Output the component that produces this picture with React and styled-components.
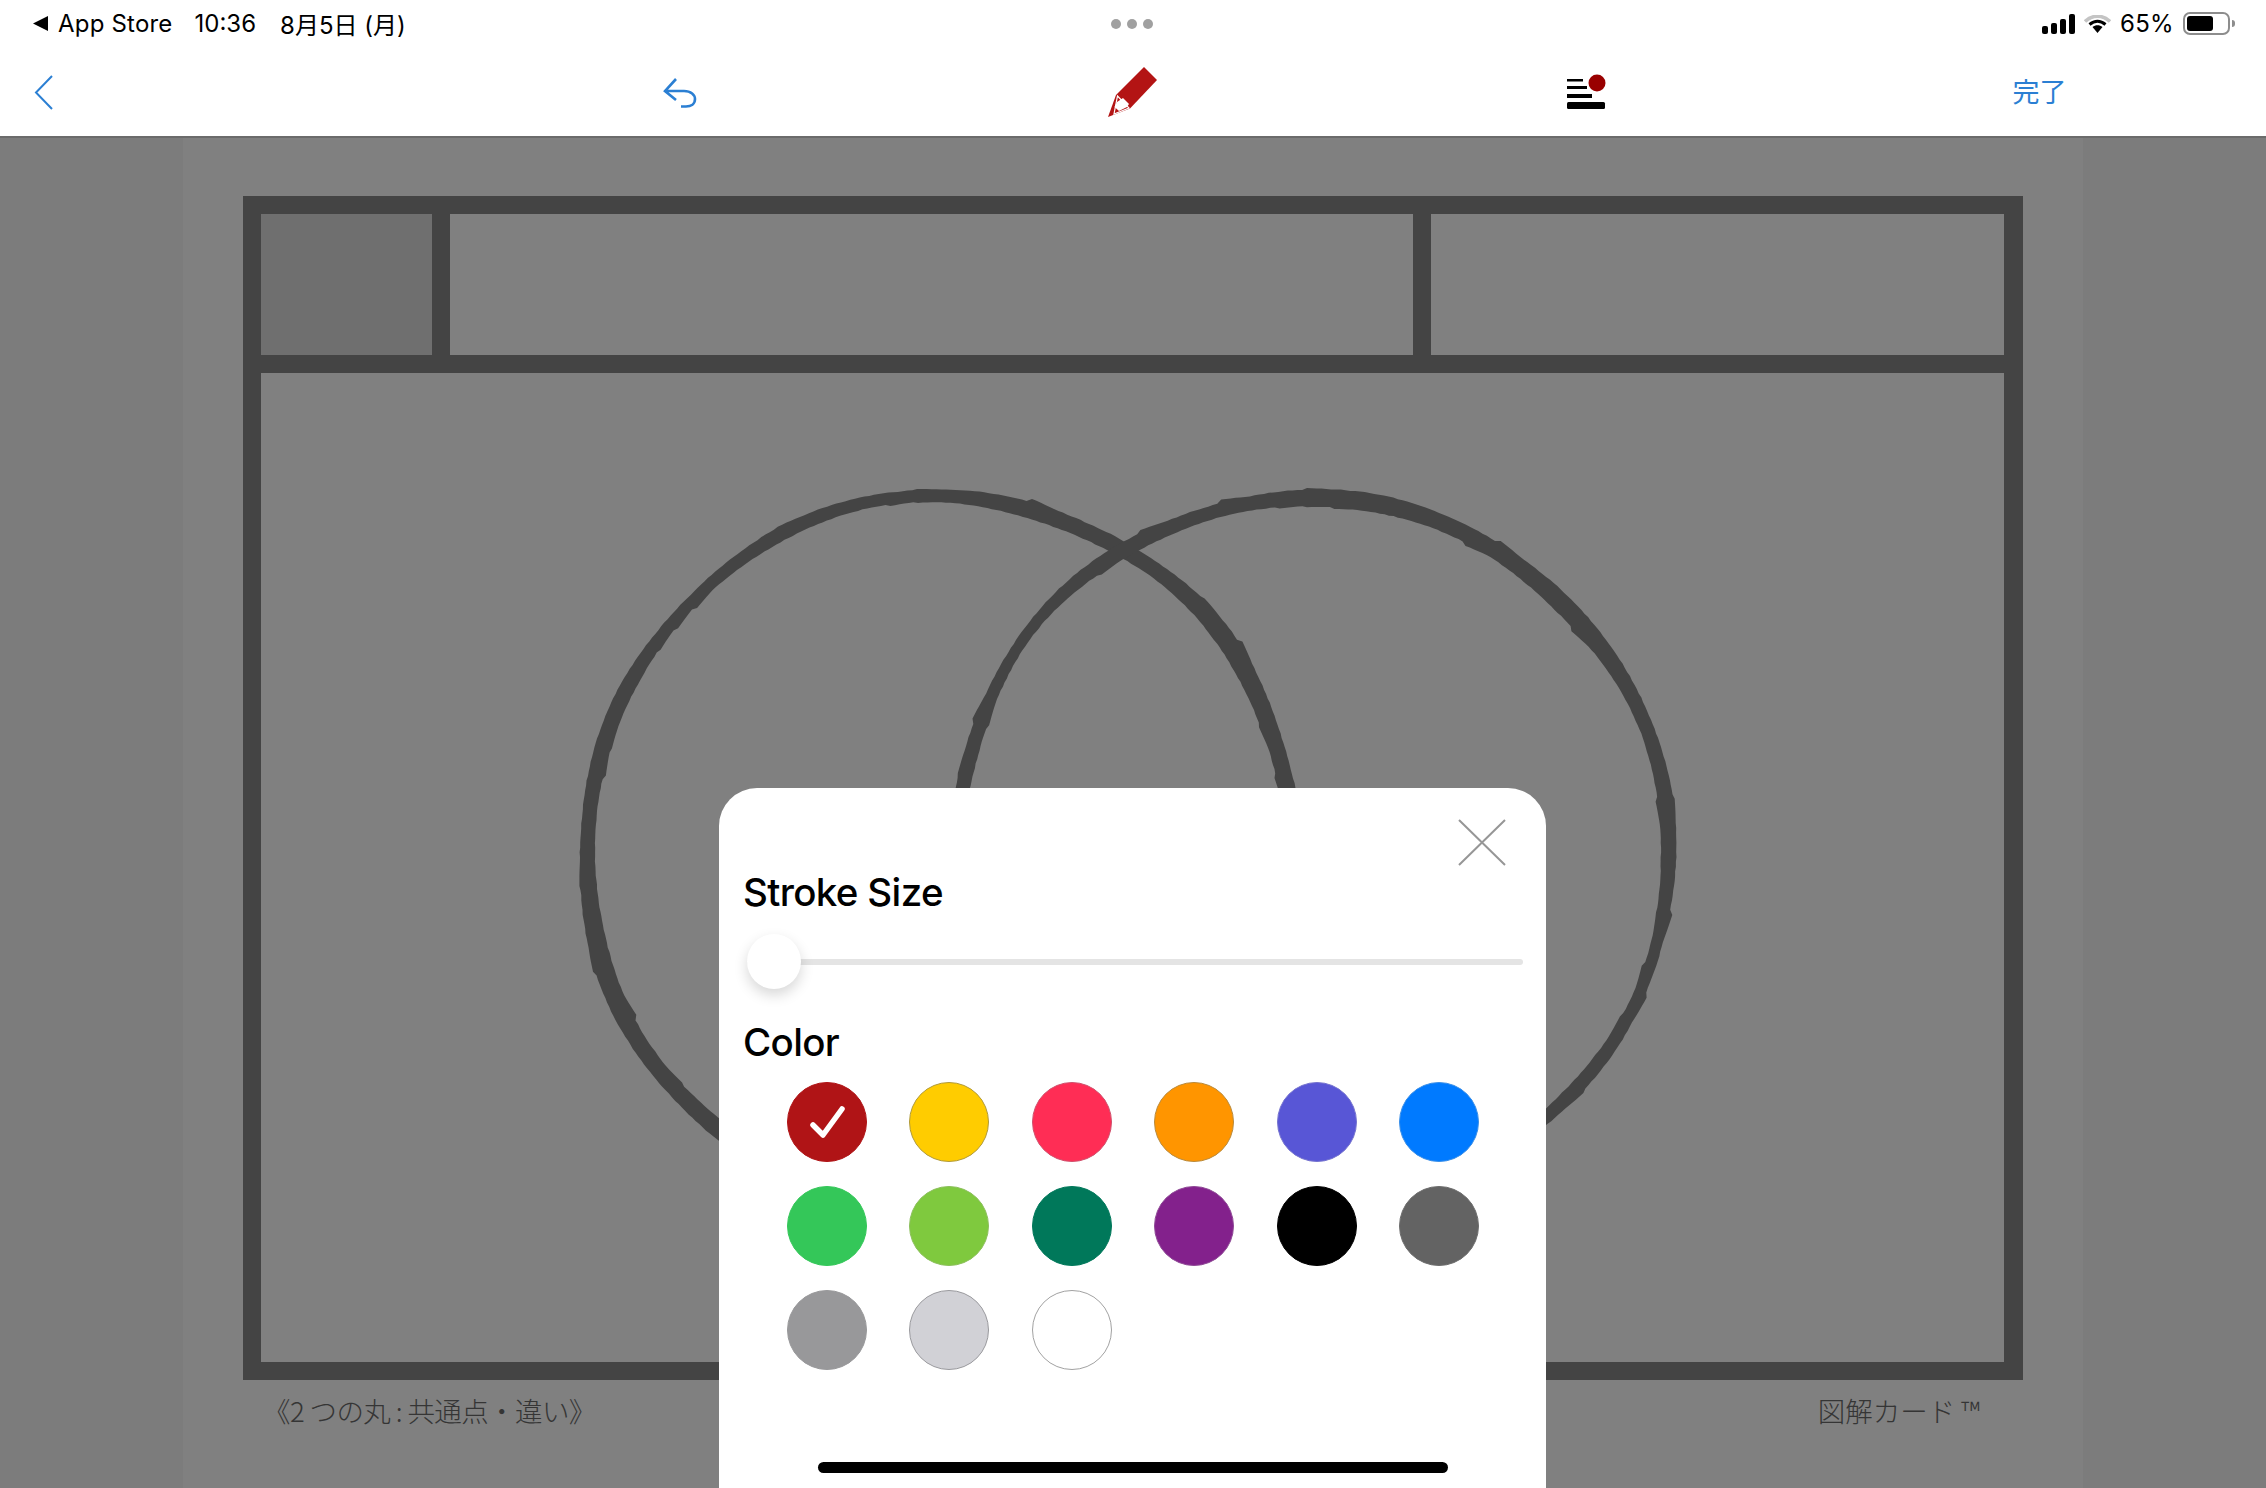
import React from "react";
import styled, { createGlobalStyle } from "styled-components";

const GlobalStyle = createGlobalStyle`
  html, body {
    margin: 0;
    padding: 0;
    background: #7c7c7c;
    font-family: Inter, "Noto Sans CJK JP", sans-serif;
  }
`;

const BLUE = "#2b7fd3";

const SWATCHES = [
  { color: "#b01416", edge: "#b01416", selected: true },
  { color: "#ffcc00", edge: "#b09a3a" },
  { color: "#ff2d55", edge: "#d0506c" },
  { color: "#ff9500", edge: "#b98a3c" },
  { color: "#5856d6", edge: "#7674cf" },
  { color: "#007aff", edge: "#3a8fe8" },
  { color: "#34c759", edge: "#34c759" },
  { color: "#7fc93e", edge: "#8cbf5c" },
  { color: "#00785a", edge: "#00785a" },
  { color: "#83218c", edge: "#8f4a96" },
  { color: "#000000", edge: "#000000" },
  { color: "#636363", edge: "#6d6d6d" },
  { color: "#98989a", edge: "#98989a" },
  { color: "#d1d1d6", edge: "#9a9a9e" },
  { color: "#ffffff", edge: "#a2a2a2" },
];

const angleDiff = (a, b) => {
  const d = Math.abs(a - b) % 360;
  return d > 180 ? 360 - d : d;
};

// hand drawn ring: radius and thickness wobble with the angle, plus burrs along the edges.
// dents pull the line inwards around an angle, the circles in the card aren't quite round
const ringPath = (cx, cy, r, seed, dents) => {
  const rand = (n) => {
    const v = Math.sin(n * 127.1 + seed * 311.7) * 43758.5453;
    return v - Math.floor(v);
  };
  const count = 480;
  const burr = (i, offset) => {
    const slot = Math.floor(i / 6);
    if (rand(slot + offset) < 0.76) return rand(i + offset + 2000) * 0.6;
    return (1 - (i % 6) / 6) * (1 + rand(slot + offset + 500) * 2.6);
  };
  const outer = [];
  const inner = [];
  for (let i = 0; i < count; i++) {
    const deg = (i / count) * 360;
    const a = (deg * Math.PI) / 180;
    const dent = dents.reduce(
      (sum, d) => sum + d.amp * Math.exp(-Math.pow(angleDiff(deg, d.at) / d.width, 2)),
      0
    );
    const wobble = Math.sin(a * 3 + seed) * 1.6 + Math.sin(a * 7 + seed * 2) * 1 - dent;
    const width = 14.5 + Math.sin(a * 2 + seed + 1.6) * 2.6 + Math.sin(a * 9 + seed) * 1.5;
    const ro = r + wobble + width / 2 + burr(i, 0);
    const ri = r + wobble - width / 2 - burr(i, 3000);
    outer.push(`${(cx + Math.cos(a) * ro).toFixed(1)} ${(cy + Math.sin(a) * ro).toFixed(1)}`);
    inner.push(`${(cx + Math.cos(a) * ri).toFixed(1)} ${(cy + Math.sin(a) * ri).toFixed(1)}`);
  }
  return `M${outer.join("L")}Z M${inner.reverse().join("L")}Z`;
};

const LEFT_RING = ringPath(685, 484, 361, 1, [
  { at: 349, amp: 14, width: 24 },
  { at: 298, amp: 6, width: 18 },
  { at: 130, amp: 7, width: 26 },
]);
const RIGHT_RING = ringPath(1046, 484, 361, 2, [
  { at: 191, amp: 10, width: 24 },
  { at: 242, amp: 6, width: 18 },
  { at: 50, amp: 6, width: 26 },
]);

const Page = styled.div`
  width: 2266px;
  height: 1488px;
  position: relative;
  overflow: hidden;
  display: flex;
  flex-direction: column;
  background: #7c7c7c;
`;

const TopBar = styled.header`
  background: #fff;
  border-bottom: 2px solid #6b6b6b;
  flex: none;
`;

const StatusBar = styled.div`
  height: 48px;
  box-sizing: border-box;
  padding: 0 36px 1px 33px;
  display: grid;
  grid-template-columns: 1fr auto 1fr;
  align-items: center;
  font-size: 24px;
  color: #000;
`;

const StatusLeft = styled.div`
  display: flex;
  align-items: center;
  white-space: nowrap;
`;

const BackTriangle = styled.svg`
  width: 15px;
  height: 15px;
  margin-right: 10px;
`;

const StatusText = styled.span`
  margin-right: ${(p) => p.$gap || 0}px;
  letter-spacing: ${(p) => p.$track || 0}px;
`;

const Dots = styled.div`
  display: flex;
  gap: 6px;
`;

const Dot = styled.span`
  width: 10px;
  height: 10px;
  border-radius: 50%;
  background: #a0a0a0;
`;

const StatusRight = styled.div`
  display: flex;
  align-items: center;
  justify-content: flex-end;
`;

const Signal = styled.div`
  display: flex;
  align-items: flex-end;
  gap: 3px;
  height: 20px;
  margin-right: 9px;
`;

const SignalBar = styled.span`
  width: 6px;
  height: ${(p) => p.$h}px;
  border-radius: 2px;
  background: #000;
`;

const Percent = styled.span`
  font-size: 24px;
  margin: 0 9px 0 9px;
  letter-spacing: 0.3px;
`;

const Battery = styled.div`
  width: 47px;
  height: 23px;
  box-sizing: border-box;
  border: 2px solid #8d8d8d;
  border-radius: 7px;
  padding: 2px;
  position: relative;

  &::after {
    content: "";
    position: absolute;
    right: -7px;
    top: 6px;
    width: 3px;
    height: 7px;
    border-radius: 0 3px 3px 0;
    background: #8d8d8d;
  }
`;

const BatteryFill = styled.div`
  width: 26px;
  height: 100%;
  background: #000;
  border-radius: 3px;
`;

const ToolBar = styled.nav`
  height: 88px;
  display: grid;
  grid-template-columns: repeat(5, 1fr);
  align-items: center;
  justify-items: center;
`;

const BackButton = styled.svg`
  justify-self: start;
  margin-left: 34px;
  width: 19px;
  height: 35px;
`;

const LayersIcon = styled.svg`
  margin: 0 0 2px 2px;
`;

const DoneLabel = styled.span`
  font-size: 27px;
  line-height: 30px;
  margin-bottom: 3px;
  color: ${BLUE};
  font-family: "Noto Sans CJK JP", sans-serif;
  font-weight: 400;
`;

const Stage = styled.main`
  flex: 1;
  width: 1900px;
  margin: 0 auto;
  box-sizing: border-box;
  padding: 58px 60px 0 60px;
  background: #808080;
`;

const Frame = styled.div`
  display: grid;
  grid-template-columns: 171px 963px 573px;
  grid-template-rows: 141px 989px;
  gap: 18px;
  padding: 18px;
  background: #444444;
`;

const Cell = styled.div`
  background: ${(p) => (p.$shaded ? "#6f6f6f" : "#808080")};
`;

const DiagramCell = styled(Cell)`
  grid-column: 1 / -1;
`;

const Diagram = styled.svg`
  display: block;
  width: 100%;
  height: 100%;
`;

const Caption = styled.div`
  display: flex;
  justify-content: space-between;
  padding: 10px 43px 0 20px;
  font-family: "Noto Sans CJK JP", sans-serif;
  font-weight: 300;
  font-size: 27.500px;
  line-height: 40px;
  color: #353535;
`;

const CaptionTitle = styled.span`
  letter-spacing: -0.600px;
`;

const Sheet = styled.section`
  position: absolute;
  left: 719px;
  bottom: 0;
  width: 827px;
  height: 700px;
  box-sizing: border-box;
  padding: 31px 23px 0 24px;
  background: #fff;
  border-radius: 38px 38px 0 0;
`;

const CloseRow = styled.div`
  display: flex;
  justify-content: flex-end;
  padding-right: 17px;
`;

const CloseIcon = styled.svg`
  display: block;
  width: 48px;
  height: 47px;
`;

const SectionTitle = styled.h2`
  margin: ${(p) => p.$top}px 0 0;
  font-size: 38.500px;
  line-height: 46px;
  font-weight: 500;
  letter-spacing: -0.650px;
  color: #000;
`;

const Slider = styled.div`
  margin: 19px 0 0 4px;
  height: 55px;
  display: flex;
  align-items: center;
  position: relative;
`;

const Track = styled.div`
  flex: 1;
  height: 6px;
  border-radius: 3px;
  background: #e4e4e4;
`;

const Thumb = styled.div`
  position: absolute;
  left: 0;
  top: 0;
  width: 54px;
  height: 55px;
  border-radius: 50%;
  background: #fff;
  box-shadow: 0 6px 14px rgba(0, 0, 0, 0.16);
`;

const SwatchGrid = styled.div`
  display: grid;
  grid-template-columns: repeat(6, 80px);
  column-gap: 42.400px;
  row-gap: 24px;
  margin: 17px 0 0 44px;
`;

const Swatch = styled.div`
  width: 80px;
  height: 80px;
  box-sizing: border-box;
  border-radius: 50%;
  background: ${(p) => p.$color};
  border: 1px solid ${(p) => p.$edge};
`;

const CheckMark = styled.svg`
  display: block;
  width: 78px;
  height: 78px;
`;

const HomeBar = styled.div`
  position: absolute;
  left: 99px;
  bottom: 15px;
  width: 630px;
  height: 11px;
  border-radius: 6px;
  background: #000;
`;

const App = () => {
  return (
    <Page>
      <GlobalStyle />
      <TopBar>
        <StatusBar>
          <StatusLeft>
            <BackTriangle viewBox="0 0 15 15">
              <path d="M15 0V15L0 7.500Z" fill="#000" />
            </BackTriangle>
            <StatusText $gap={22} $track={0.2}>App Store</StatusText>
            <StatusText $gap={24}>10:36</StatusText>
            <StatusText>8月5日 (月)</StatusText>
          </StatusLeft>
          <Dots>
            <Dot />
            <Dot />
            <Dot />
          </Dots>
          <StatusRight>
            <Signal>
              <SignalBar $h={8} />
              <SignalBar $h={11} />
              <SignalBar $h={15} />
              <SignalBar $h={20} />
            </Signal>
            <svg width="27" height="18" viewBox="0 0 27 18">
              <path d="M1 6.500C8.500 -0.500 18.500 -0.500 26 6.500" fill="none" stroke="#c4c4c4" strokeWidth="3.600" />
              <path d="M5.500 9.500C10.500 5.300 16.500 5.300 21.500 9.500" fill="none" stroke="#000" strokeWidth="3" />
              <path d="M8.500 12C11.500 9.500 15.500 9.500 18.500 12L13.500 18Z" fill="#000" />
            </svg>
            <Percent>65%</Percent>
            <Battery>
              <BatteryFill />
            </Battery>
          </StatusRight>
        </StatusBar>
        <ToolBar>
          <BackButton viewBox="0 0 19 35">
            <path d="M18 1L2 17.500L18 34" fill="none" stroke={BLUE} strokeWidth="2" />
          </BackButton>
          <svg width="34" height="31" viewBox="0 0 34 31">
            <path
              d="M13 2L2 14L13 23M2 14H21C28 14 32 18 32 22C32 27 28 29.500 23 29.500H18"
              fill="none"
              stroke={BLUE}
              strokeWidth="2.600"
            />
          </svg>
          <svg width="50" height="50" viewBox="0 0 50 50">
            <path d="M36 0L49 13L22 41.500L0 50L8 28Z" fill="#b31414" />
            <path d="M9.500 29L21 41L6 47Z" fill="#b31414" stroke="#fff" strokeWidth="1.200" />
            <path d="M9 35L15 31L21 37L19 40L11 44L6.500 40Z" fill="#fff" />
          </svg>
          <LayersIcon width="40" height="36" viewBox="0 0 40 36">
            <rect x="0" y="6" width="16" height="2.500" fill="#000" />
            <rect x="0" y="13" width="20" height="3" fill="#000" />
            <rect x="0" y="21" width="25" height="4" fill="#000" />
            <rect x="0" y="29" width="38" height="7" rx="1.500" fill="#000" />
            <circle cx="30" cy="10" r="8.500" fill="#990000" />
          </LayersIcon>
          <DoneLabel>完了</DoneLabel>
        </ToolBar>
      </TopBar>

      <Stage>
        <Frame>
          <Cell $shaded />
          <Cell />
          <Cell />
          <DiagramCell>
            <Diagram viewBox="0 0 1743 989">
              <path d={LEFT_RING} fill="#444444" fillRule="evenodd" />
              <path d={RIGHT_RING} fill="#444444" fillRule="evenodd" />
            </Diagram>
          </DiagramCell>
        </Frame>
        <Caption>
          <CaptionTitle>《2 つの丸 : 共通点・違い》</CaptionTitle>
          <span>図解カード ™</span>
        </Caption>
      </Stage>

      <Sheet>
        <CloseRow>
          <CloseIcon viewBox="0 0 48 47">
            <path d="M1 1L47 46M47 1L1 46" stroke="#969696" strokeWidth="2" fill="none" />
          </CloseIcon>
        </CloseRow>
        <SectionTitle $top={3}>Stroke Size</SectionTitle>
        <Slider>
          <Track />
          <Thumb />
        </Slider>
        <SectionTitle $top={30}>Color</SectionTitle>
        <SwatchGrid>
          {SWATCHES.map((s) => (
            <Swatch key={s.color} $color={s.color} $edge={s.edge}>
              {s.selected && (
                <CheckMark viewBox="0 0 78 78">
                  <path d="M25 42L35 52L54 26" fill="none" stroke="#fff" strokeWidth="5.500" strokeLinecap="round" strokeLinejoin="round" />
                </CheckMark>
              )}
            </Swatch>
          ))}
        </SwatchGrid>
        <HomeBar />
      </Sheet>
    </Page>
  );
};

export default App;
